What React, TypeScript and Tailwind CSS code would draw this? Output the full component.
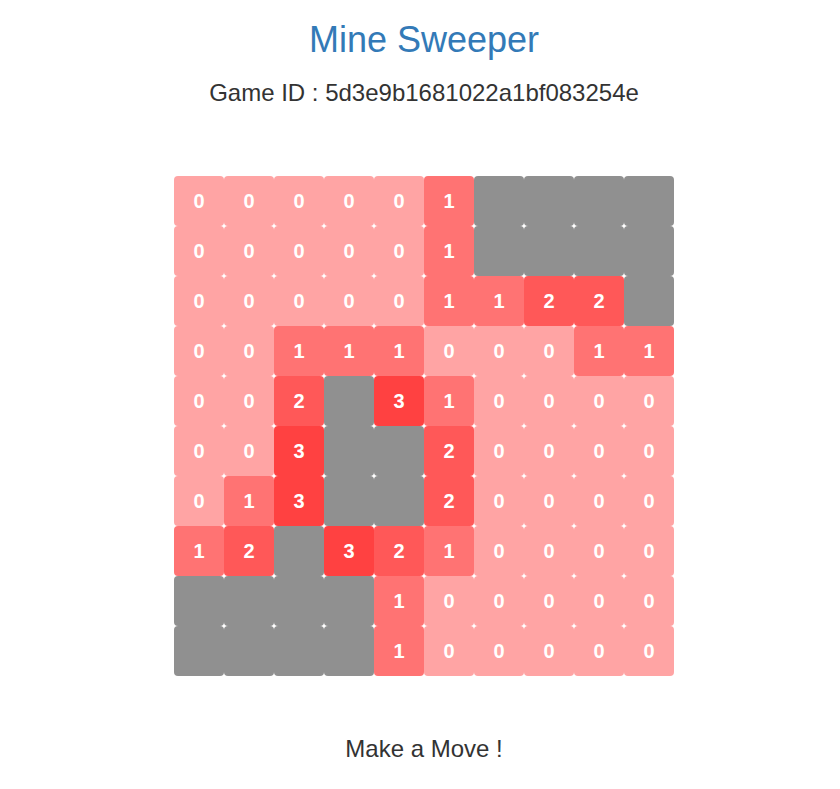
import React from "react";

const G = -1;
const board: number[][] = [
  [0, 0, 0, 0, 0, 1, G, G, G, G],
  [0, 0, 0, 0, 0, 1, G, G, G, G],
  [0, 0, 0, 0, 0, 1, 1, 2, 2, G],
  [0, 0, 1, 1, 1, 0, 0, 0, 1, 1],
  [0, 0, 2, G, 3, 1, 0, 0, 0, 0],
  [0, 0, 3, G, G, 2, 0, 0, 0, 0],
  [0, 1, 3, G, G, 2, 0, 0, 0, 0],
  [1, 2, G, 3, 2, 1, 0, 0, 0, 0],
  [G, G, G, G, 1, 0, 0, 0, 0, 0],
  [G, G, G, G, 1, 0, 0, 0, 0, 0],
];

const colorFor = (v: number) => {
  switch (v) {
    case 0:
      return "bg-[#ffa4a4]";
    case 1:
      return "bg-[#ff7373]";
    case 2:
      return "bg-[#ff5858]";
    case 3:
      return "bg-[#ff4141]";
    default:
      return "bg-[#909090]";
  }
};

export default function App() {
  return (
    <div
      className="min-h-[789px] bg-white pl-2 text-center text-[#333]"
      style={{ fontFamily: '"Liberation Sans", Arial, sans-serif' }}
    >
      <h1 className="pt-5 text-[36px] leading-[1.1] text-[#337ab7]">Mine Sweeper</h1>
      <div className="mt-[20px] text-[24px] leading-[26px]">Game ID : 5d3e9b1681022a1bf083254e</div>
      <div className="mt-[70px] flex justify-center">
        <div className="grid grid-cols-[repeat(10,50px)] grid-rows-[repeat(10,50px)]">
          {board.flatMap((row, r) =>
            row.map((v, c) => (
              <div
                key={`${r}-${c}`}
                className={`flex items-center justify-center rounded-[4px] text-[20px] font-bold text-white ${colorFor(v)}`}
              >
                {v >= 0 ? v : ""}
              </div>
            ))
          )}
        </div>
      </div>
      <div className="mt-[60px] text-[24px] leading-[26px]">Make a Move !</div>
    </div>
  );
}
